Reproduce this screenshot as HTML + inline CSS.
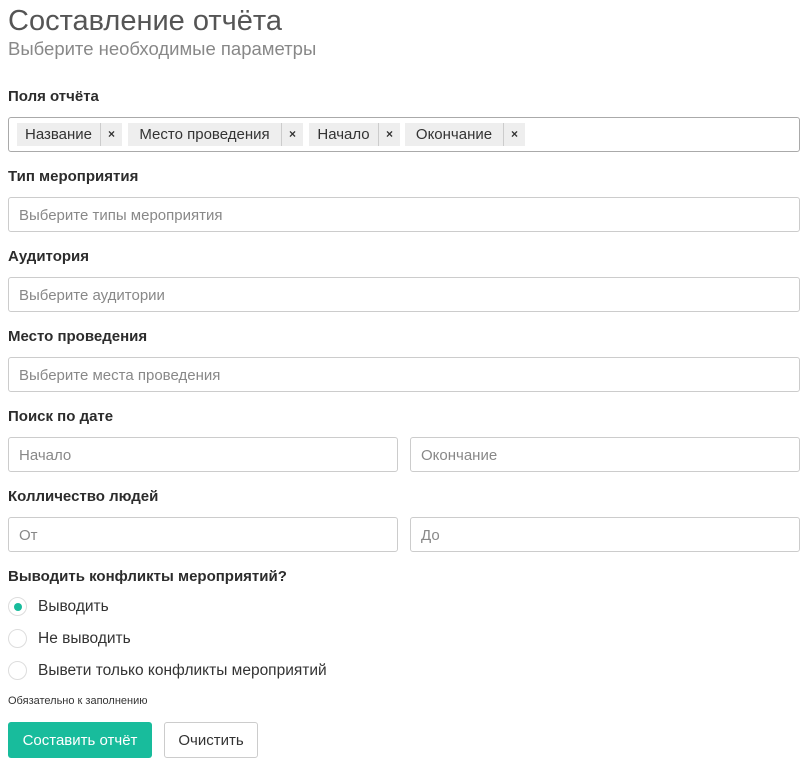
<!DOCTYPE html>
<html><head><meta charset="utf-8"><style>
body{margin:0;width:809px;height:768px;background:#fff;font-family:"Liberation Sans","Noto Sans CJK SC",sans-serif;color:#333;position:relative;overflow:hidden}
.a{position:absolute;white-space:nowrap}
.h1{left:8px;top:1px;font-size:29px;font-weight:normal;color:#555;line-height:40px}
.sub{left:8px;top:37px;font-size:18.5px;color:#888;line-height:24px}
.lb{left:8px;font-size:15px;font-weight:bold;color:#2c2c2c;line-height:20px}
.in{position:absolute;box-sizing:border-box;height:35px;border:1px solid #ccc;border-radius:3px;font-size:15px;color:#888;padding-left:10px;line-height:36px}
.tag{position:absolute;top:123px;height:23px;background:#eee;font-size:15px;color:#333;line-height:23px}
.tag span{display:inline-block;box-sizing:border-box;text-align:center;border-right:1px solid #ccc;vertical-align:top}
.tag b{display:inline-block;width:21px;text-align:center;font-size:12px;font-weight:bold;vertical-align:top}
.r{position:absolute;left:8px;width:19px;height:19px;box-sizing:border-box;border:1px solid #ddd;border-radius:50%}
.rt{left:38px;font-size:15.5px;color:#333;line-height:20px}
</style></head><body>
<div class="a h1">Составление отчёта</div>
<div class="a sub">Выберите необходимые параметры</div>

<div class="a lb" style="top:87px">Поля отчёта</div>
<div class="in" style="left:8px;top:117px;width:792px;border-color:#aaa"></div>
<div class="tag" style="left:17px"><span style="width:84px">Название</span><b>×</b></div>
<div class="tag" style="left:128px"><span style="width:154px">Место проведения</span><b>×</b></div>
<div class="tag" style="left:309px"><span style="width:70px">Начало</span><b>×</b></div>
<div class="tag" style="left:405px"><span style="width:99px">Окончание</span><b>×</b></div>

<div class="a lb" style="top:167px">Тип мероприятия</div>
<div class="in" style="left:8px;top:197px;width:792px">Выберите типы мероприятия</div>
<div class="a lb" style="top:247px">Аудитория</div>
<div class="in" style="left:8px;top:277px;width:792px">Выберите аудитории</div>
<div class="a lb" style="top:327px">Место проведения</div>
<div class="in" style="left:8px;top:357px;width:792px">Выберите места проведения</div>
<div class="a lb" style="top:407px">Поиск по дате</div>
<div class="in" style="left:8px;top:437px;width:390px;line-height:35px">Начало</div>
<div class="in" style="left:410px;top:437px;width:390px;line-height:35px">Окончание</div>
<div class="a lb" style="top:487px">Колличество людей</div>
<div class="in" style="left:8px;top:517px;width:390px;line-height:35px">От</div>
<div class="in" style="left:410px;top:517px;width:390px;line-height:35px">До</div>
<div class="a lb" style="top:567px">Выводить конфликты мероприятий?</div>

<div class="r" style="top:597px"><div style="position:absolute;left:4.5px;top:4.5px;width:8px;height:8px;border-radius:50%;background:#18bc9c"></div></div>
<div class="a rt" style="top:597px">Выводить</div>
<div class="r" style="top:629px"></div>
<div class="a rt" style="top:629px">Не выводить</div>
<div class="r" style="top:661px"></div>
<div class="a rt" style="top:661px">Вывети только конфликты мероприятий</div>

<div class="a" style="left:8px;top:695px;font-size:11px;color:#333">Обязательно к заполнению</div>
<div class="a" style="left:8px;top:722px;width:144px;height:36px;background:#18bc9c;border-radius:3px;color:#fff;font-size:15px;text-align:center;line-height:38px">Составить отчёт</div>
<div class="a" style="left:164px;top:722px;width:94px;height:36px;box-sizing:border-box;border:1px solid #ccc;border-radius:3px;color:#333;font-size:15px;text-align:center;line-height:36px">Очистить</div>
</body></html>
